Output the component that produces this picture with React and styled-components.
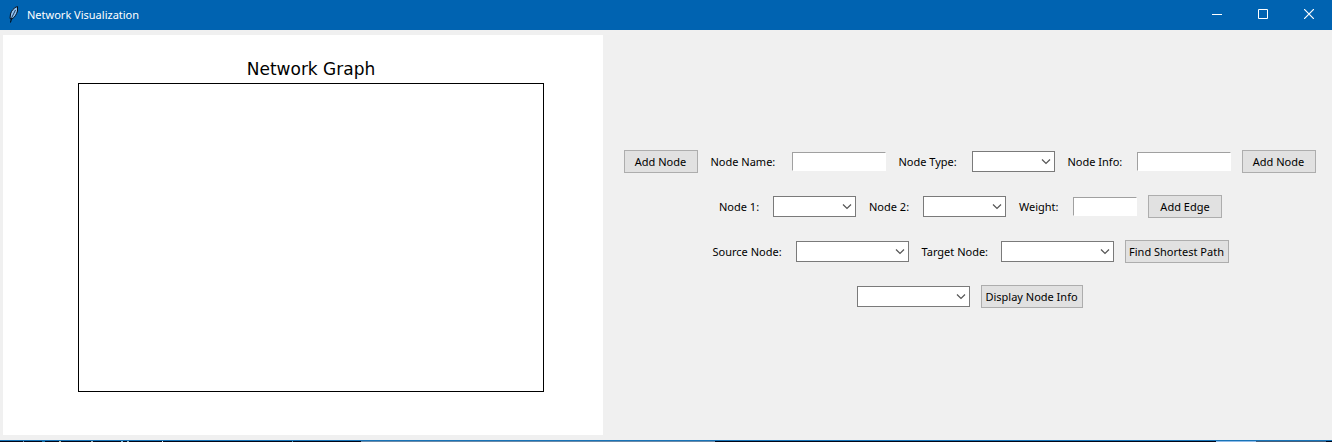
import React from "react";
import styled, { createGlobalStyle } from "styled-components";

const GlobalStyle = createGlobalStyle`
  *, *::before, *::after { box-sizing: border-box; }
  body {
    margin: 0;
    background: #f0f0f0;
    color: #000;
    font: 11px/16px "Noto Sans", "Open Sans", sans-serif;
  }
`;

const Window = styled.div`
  display: flex;
  flex-direction: column;
  min-height: 100vh;
`;

const TitleBar = styled.header`
  display: flex;
  align-items: center;
  height: 30px;
  padding: 0 0 0 4px;
  background: #0063b1;
  color: #fff;
`;

const Title = styled.h1`
  flex: 1;
  margin: 0 0 0 3px;
  font-size: 11px;
  font-weight: 400;
`;

const CaptionButton = styled.button`
  display: flex;
  align-items: center;
  justify-content: center;
  width: 46px;
  height: 30px;
  margin: 0;
  padding: 0 0 2px;
  border: 0;
  background: transparent;
  color: #fff;
`;

const Body = styled.main`
  display: flex;
  flex: 1;
  padding: 5px 1px 5px 3px;
  gap: 5px;
`;

const Figure = styled.figure`
  display: flex;
  flex-direction: column;
  flex: 0 0 600px;
  margin: 0;
  padding: 24px 59px 43px 75px;
  background: #fff;
`;

const FigureTitle = styled.figcaption`
  margin-bottom: 4px;
  font: 17px/20px "DejaVu Sans", sans-serif;
  text-align: center;
`;

const Axes = styled.div`
  flex: 1;
  border: 1px solid #000;
`;

const Controls = styled.div`
  display: flex;
  flex: 1;
  flex-direction: column;
  gap: 22px;
  padding-top: 115px;
`;

const Row = styled.form`
  display: flex;
  align-items: center;
  justify-content: center;
  gap: 11px;
`;

const Label = styled.label`
  flex: none;
  width: ${(p) => p.$width}px;
  padding-left: 2px;
  white-space: nowrap;
`;

const Button = styled.button`
  display: flex;
  align-items: center;
  justify-content: center;
  width: ${(p) => p.$width}px;
  height: 23px;
  padding: 0;
  border: 1px solid #adadad;
  background: #e1e1e1;
  color: #000;
  font: inherit;
  white-space: nowrap;
`;

const Entry = styled.input`
  width: ${(p) => p.$width}px;
  height: 19px;
  padding: 0 2px;
  border: 1px solid #fff;
  border-top-color: #a0a0a0;
  border-left-color: #a0a0a0;
  border-radius: 0;
  background: #fff;
  font: inherit;
  outline: 0;
`;

const ComboBox = styled.div`
  display: flex;
  position: relative;
  width: ${(p) => p.$width}px;
  height: 21px;
`;

const Select = styled.select`
  flex: 1;
  min-width: 0;
  padding: 0 18px 0 3px;
  border: 1px solid #7a7a7a;
  border-radius: 0;
  background: #fff;
  font: inherit;
  appearance: none;
`;

const Chevron = styled.svg`
  position: absolute;
  top: 8px;
  right: 4px;
  pointer-events: none;
`;

const TaskbarEdge = styled.footer`
  display: flex;
  height: 2px;
  border-top: 1px solid #1874b8;
  background: #020617;
`;

const Segment = styled.div`
  flex: ${(p) => p.$size} 1 0;
  background: ${(p) => p.$color};
`;

const SEGMENTS = [
  [23, "#020617"], [1, "#6f94b0"], [18, "#020617"], [3, "#1b6f9f"],
  [14, "#020617"], [2, "#c5c0a0"], [30, "#020617"], [2, "#a7b4b8"],
  [28, "#020617"], [2, "#8ec0dc"], [4, "#020617"], [2, "#a7b4b8"],
  [33, "#020617"], [1, "#dfe8ee"], [129, "#020617"], [1, "#4f9cb8"],
  [68, "#020617"], [354, "#6b8aa8"], [501, "#020617"], [40, "#8fbbe8"],
  [70, "#46607c"], [6, "#020617"],
];

function Feather() {
  return (
    <svg width="20" height="22" viewBox="0 0 20 22" aria-hidden="true">
      <path d="M13.500 2.500C10 3.500 7.500 6.500 6.500 10L6 14.500l2 .5c2.500-1.500 4.500-4.500 5.500-8z" fill="#8fc0ee" stroke="#06101c" />
      <path d="M11.500 6L8.500 12 7 15.500" fill="none" stroke="#17375a" />
      <path d="M7.500 14.500l-1 4" fill="none" stroke="#000" />
    </svg>
  );
}

function Combo({ id, width, name }) {
  return (
    <ComboBox $width={width}>
      <Select id={id} aria-label={name} defaultValue="">
        <option value="" />
      </Select>
      <Chevron width="10" height="6" viewBox="0 0 10 6" aria-hidden="true">
        <path d="M1 .5l4 4 4-4" fill="none" stroke="#555" strokeWidth="1.200" />
      </Chevron>
    </ComboBox>
  );
}

export default function App() {
  return (
    <>
      <GlobalStyle />
      <Window>
        <TitleBar>
          <Feather />
          <Title>Network Visualization</Title>
          <CaptionButton aria-label="Minimize">
            <svg width="10" height="10"><path d="M0 5.500h10" stroke="currentColor" /></svg>
          </CaptionButton>
          <CaptionButton aria-label="Maximize">
            <svg width="10" height="10"><path d="M.5.5h9v9h-9z" fill="none" stroke="currentColor" /></svg>
          </CaptionButton>
          <CaptionButton aria-label="Close">
            <svg width="10" height="10"><path d="M0 0l10 10M10 0L0 10" stroke="currentColor" strokeWidth="1.200" /></svg>
          </CaptionButton>
        </TitleBar>
        <Body>
          <Figure>
            <FigureTitle>Network Graph</FigureTitle>
            <Axes />
          </Figure>
          <Controls>
            <Row>
              <Button type="button" $width={74}>Add Node</Button>
              <Label htmlFor="node-name" $width={72}>Node Name:</Label>
              <Entry id="node-name" $width={94} />
              <Label htmlFor="node-type" $width={64}>Node Type:</Label>
              <Combo id="node-type" width={83} />
              <Label htmlFor="node-info" $width={60}>Node Info:</Label>
              <Entry id="node-info" $width={94} />
              <Button type="button" $width={74}>Add Node</Button>
            </Row>
            <Row>
              <Label htmlFor="node-1" $width={45}>Node 1:</Label>
              <Combo id="node-1" width={83} />
              <Label htmlFor="node-2" $width={45}>Node 2:</Label>
              <Combo id="node-2" width={83} />
              <Label htmlFor="weight" $width={45}>Weight:</Label>
              <Entry id="weight" $width={64} />
              <Button type="button" $width={74}>Add Edge</Button>
            </Row>
            <Row>
              <Label htmlFor="source" $width={74}>Source Node:</Label>
              <Combo id="source" width={113} />
              <Label htmlFor="target" $width={70}>Target Node:</Label>
              <Combo id="target" width={113} />
              <Button type="button" $width={104}>Find Shortest Path</Button>
            </Row>
            <Row>
              <Combo id="display-node" name="Node to display" width={113} />
              <Button type="button" $width={102}>Display Node Info</Button>
            </Row>
          </Controls>
        </Body>
        <TaskbarEdge>
          {SEGMENTS.map(([size, color], i) => (
            <Segment key={i} $size={size} $color={color} />
          ))}
        </TaskbarEdge>
      </Window>
    </>
  );
}
